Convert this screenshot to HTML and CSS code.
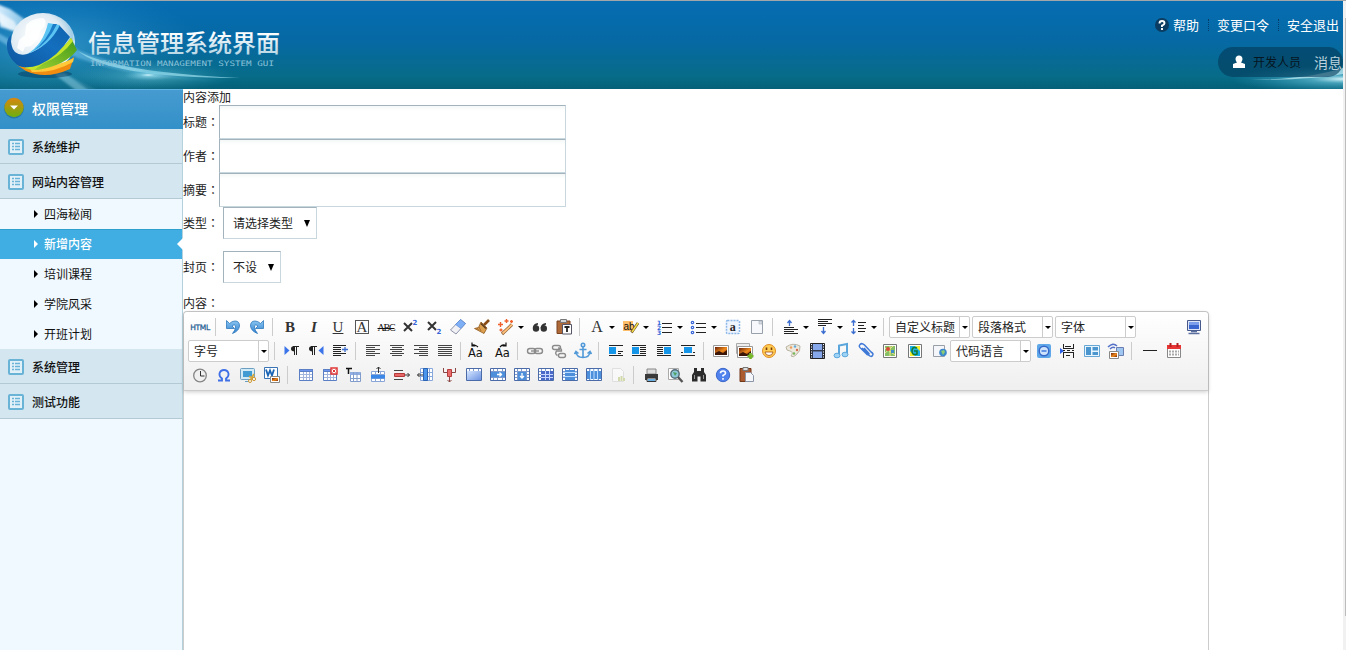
FILE: index.html
```
<!DOCTYPE html>
<html lang="zh-CN">
<head>
<meta charset="utf-8">
<title>信息管理系统界面</title>
<link rel="stylesheet" href="styles.css">
</head>
<body>
<svg class="defs" aria-hidden="true">
  <defs>
    <linearGradient id="tg" x1="0" y1="0" x2="0" y2="1"><stop offset=".25" stop-color="#fff"/><stop offset="1" stop-color="#a9cfe0"/></linearGradient>
    <linearGradient id="cell" x1="0" y1="0" x2="1" y2="1"><stop offset="0" stop-color="#d6e6ff"/><stop offset="1" stop-color="#6d93e2"/></linearGradient>
    <linearGradient id="arrow" x1="0" y1="0" x2="0" y2="1"><stop offset="0" stop-color="#8cc8f2"/><stop offset="1" stop-color="#2f7fd0"/></linearGradient>
    <linearGradient id="sun" x1="0" y1="0" x2="1" y2="1"><stop offset="0" stop-color="#6a2108"/><stop offset=".55" stop-color="#f08a1c"/><stop offset="1" stop-color="#7a2a08"/></linearGradient>
    <g id="list"><rect x="1" y="1" width="14" height="14" rx="1" fill="#e2f1f8" stroke="#69b3d6" stroke-width="2"/><path d="M4 4.500h2M7 4.500h5M4 7.500h2M7 7.500h5M4 10.500h2M7 10.500h5" stroke="#69b3d6" stroke-width="1.600"/></g>
    <g id="grid" fill="none" stroke="#5b7fc4"><path fill="#fff" d="M5.500 6.500h13v11h-13z"/><path stroke="#a3b5dc" d="M6 11.500h12M6 14.500h12M9.500 9v8M12.500 9v8M15.500 9v8"/><path fill="#6d95ee" d="M5.500 6.500h13v2h-13z"/></g>
    <g id="frame"><path d="M4.500 5.500h15v12h-15z" fill="#fff" stroke="#4a6aa8"/><path d="M5 8.500h14M5 11.500h14M5 14.500h14M7.500 6v11M11.500 6v11M16.500 6v11" stroke="#7d9acf"/></g>
    <g id="photo"><path d="M4.500 6.500h15v11h-15z" fill="#fff" stroke="#999"/><path d="M6 8h12v8H6z" fill="url(#sun)"/><path d="M6 14l4-2 4 2 4-3v5H6z" fill="#3b1608"/></g>
  </defs>
</svg>

<div class="page">
  <header class="top">
    <svg class="art" width="1343" height="89">
      <defs>
        <linearGradient id="bg" x1="0" y1="0" x2="0" y2="1"><stop offset="0" stop-color="#066db2"/><stop offset=".45" stop-color="#0669a4"/><stop offset=".85" stop-color="#076c88"/><stop offset="1" stop-color="#055f76"/></linearGradient>
        <radialGradient id="glow"><stop offset="0" stop-color="#dffaff" stop-opacity=".95"/><stop offset=".3" stop-color="#76cfe4" stop-opacity=".55"/><stop offset="1" stop-color="#3aa7cd" stop-opacity="0"/></radialGradient>
        <radialGradient id="haze"><stop offset="0" stop-color="#4fb4e4" stop-opacity=".6"/><stop offset="1" stop-color="#2a8cc8" stop-opacity="0"/></radialGradient>
        <linearGradient id="beam" gradientUnits="userSpaceOnUse" x1="0" y1="0" x2="230" y2="0"><stop offset="0" stop-color="#d8efff" stop-opacity=".95"/><stop offset=".2" stop-color="#6fbde6" stop-opacity=".7"/><stop offset=".6" stop-color="#62b6dd" stop-opacity=".45"/><stop offset="1" stop-color="#62b6dd" stop-opacity="0"/></linearGradient>
        <radialGradient id="ball" cx=".4" cy=".4" r=".62"><stop offset="0" stop-color="#fff"/><stop offset=".65" stop-color="#dfebf3"/><stop offset=".9" stop-color="#9fcbe5"/><stop offset="1" stop-color="#e9f6fd"/></radialGradient>
        <linearGradient id="wave" x1="0" y1="1" x2="1" y2="0"><stop offset="0" stop-color="#0d559f"/><stop offset=".6" stop-color="#146fbe"/><stop offset="1" stop-color="#0f63ae"/></linearGradient>
        <linearGradient id="leaf" x1="0" y1="1" x2="1" y2="0"><stop offset="0" stop-color="#a6d430"/><stop offset="1" stop-color="#3f9a1c"/></linearGradient>
        <filter id="soft" x="-10%" y="-30%" width="120%" height="160%"><feGaussianBlur stdDeviation="1.200"/></filter>
      </defs>
      <rect width="1343" height="89" fill="url(#bg)"/>
      <ellipse cx="50" cy="45" rx="150" ry="60" fill="url(#haze)"/>
      <g filter="url(#soft)">
        <path d="M-3 3L10 8 30 22 80 50Q150 76 230 80Q140 80 78 57L20 32 0 26z" fill="url(#beam)"/>
        <path d="M-3 10L14 20 20 31 10 29 -3 20z" fill="#fff" opacity=".6"/>
        <path d="M-3 31L12 40 10 46 -3 38z" fill="#8ecdf0" opacity=".55"/>
        <path d="M54 73L64 72 92 91H78z" fill="#8ecde2" opacity=".55"/>
        <path d="M64 73L98 91" stroke="#8ecde2" opacity=".4"/>
      </g>
      <ellipse cx="150" cy="75" rx="85" ry="16" fill="url(#glow)" opacity=".6"/>
      <path d="M78 50Q115 71 240 77Q110 77 78 50z" fill="#9ce0f0" opacity=".7"/>
      <ellipse cx="148" cy="74" rx="24" ry="5" fill="url(#glow)"/>
      <ellipse cx="1343" cy="78" rx="112" ry="14" fill="url(#glow)"/>
      <path d="M1250 79Q1310 78 1343 67V73Q1310 79 1250 79z" fill="#bdeaf3" opacity=".75"/>
      <ellipse cx="45" cy="73" rx="27" ry="4" fill="#033b63" opacity=".5"/>
      <ellipse cx="43" cy="41" rx="32" ry="29" fill="url(#ball)"/>
      <path d="M26 24q6-7 17-7 4 2 2 8l-5 5-2 8-7 7-6 1-2 5-6-4 2-8 6-5z" fill="#fff" opacity=".85"/>
      <path d="M17 64Q32 70 50 66T74 56L70 68Q46 79 26 70z" fill="#f08c10"/>
      <path d="M30 68Q54 67 74 57L73 61Q54 72 32 71z" fill="#ffc93a"/>
      <path d="M71 37L77 49Q66 64 38 69L26 68Q55 58 71 37z" fill="url(#leaf)"/>
      <path d="M71 37L73 40Q62 55 44 62L34 69 24 67Q56 56 71 37z" fill="#c3e52c"/>
      <path d="M59 24L70 36Q58 56 39 64Q28 68 19 65Q6 56 7 42Q8 36 11 34Q10 46 15 51Q20 55 27 53Q48 46 59 24z" fill="url(#wave)"/>
      <path d="M48 22L60 24Q50 45 27 53Q43 44 48 22z" fill="#5cc4f2"/>
      <path d="M53 23L57 23Q48 42 33 50Q47 40 53 23z" fill="#1b7cc8"/>
      <text class="brand" x="88" y="51" textLength="192" fill="url(#tg)">信息管理系统界面</text>
      <text class="brand-sub" x="90" y="65" textLength="184" lengthAdjust="spacingAndGlyphs">INFORMATION MANAGEMENT SYSTEM GUI</text>
    </svg>
    <nav class="links">
      <svg width="14" height="14"><circle cx="7" cy="7" r="7" fill="#0b3c61"/><path d="M4.500 5.500Q4.500 3 7 3t2.500 2.300Q9.500 6.500 7 7.700V9M7 10v2" fill="none" stroke="#fff" stroke-width="1.900"/></svg>
      <a>帮助</a><i></i><a>变更口令</a><i></i><a>安全退出</a>
    </nav>
    <div class="user">
      <svg width="14" height="14"><path d="M7 0.500a3.500 3.500 0 0 1 3.500 3.700Q10.300 6 9 7.500L13 9V13H1V9L5 7.500Q3.700 6 3.500 4.200A3.500 3.500 0 0 1 7 .5z" fill="#fff"/></svg>
      <b>开发人员</b><a>消息</a>
    </div>
  </header>

  <div class="body">
    <aside class="side">
      <h1><svg width="20" height="22"><defs><linearGradient id="kn" x1="0" y1="0" x2="0" y2="1"><stop offset="0" stop-color="#d9860f"/><stop offset="1" stop-color="#6cb10f"/></linearGradient></defs><circle cx="10" cy="11.500" r="10" fill="#2877a6"/><circle cx="10" cy="10.500" r="9.700" fill="url(#kn)"/><path d="M6 8.500h8l-4 4z" fill="#fff"/></svg>权限管理</h1>
      <h2><svg width="16" height="16"><use href="#list"/></svg>系统维护</h2>
      <h2><svg width="16" height="16"><use href="#list"/></svg>网站内容管理</h2>
      <ul>
        <li>四海秘闻</li>
        <li class="on">新增内容</li>
        <li>培训课程</li>
        <li>学院风采</li>
        <li>开班计划</li>
      </ul>
      <h2><svg width="16" height="16"><use href="#list"/></svg>系统管理</h2>
      <h2><svg width="16" height="16"><use href="#list"/></svg>测试功能</h2>
    </aside>

    <main class="main">
      <p class="title">内容添加</p>
      <div class="row"><label>标题<s lang="zh-TW">：</s></label><span class="input"></span></div>
      <div class="row"><label>作者<s lang="zh-TW">：</s></label><span class="input"></span></div>
      <div class="row"><label>摘要<s lang="zh-TW">：</s></label><span class="input"></span></div>
      <div class="row pick"><label>类型<s lang="zh-TW">：</s></label><span class="select">请选择类型<em></em></span></div>
      <div class="row pick"><label>封页<s lang="zh-TW">：</s></label><span class="select">不设<em></em></span></div>
      <p class="caption">内容<s lang="zh-TW">：</s></p>

      <section class="editor">
        <div class="bar">
          <div class="line">
            <span class="g html">HTML</span><i class="sep"></i>
            <svg class="c"><path d="M5.500 5.500v8h8l-2.500-2.500Q14.500 8.500 14.500 12 14.500 15 11.500 18.500 18 16 18.500 11 18.500 6 14 6 11 6 8.500 8.500z" fill="url(#arrow)" stroke="#2d78bd" stroke-width=".8"/></svg>
            <svg class="c"><path d="M18.500 5.500v8h-8l2.500-2.500Q9.500 8.500 9.500 12 9.500 15 12.500 18.500 6 16 5.500 11 5.500 6 10 6 13 6 15.500 8.500z" fill="url(#arrow)" stroke="#2d78bd" stroke-width=".8"/></svg>
            <i class="sep"></i>
            <span class="g bold">B</span><span class="g ital">I</span><span class="g und">U</span><span class="g"><span class="boxed">A</span></span><span class="g abc">ABC</span>
            <svg class="c"><path d="M6 8l8 8M14 8l-8 8" stroke="#333" stroke-width="2"/><text class="pow" x="14.500" y="9.500">2</text></svg>
            <svg class="c"><path d="M6 7l8 8M14 7l-8 8" stroke="#333" stroke-width="2"/><text class="pow" x="14.500" y="18.500">2</text></svg>
            <svg class="c"><path d="M14.500 4.500l5 4-9.500 10.500-5.500-4z" fill="#f1f1f6" stroke="#8d93a8"/><path d="M14.500 4.500l5 4-4.500 5-5.500-4z" fill="#7fb0f5" stroke="#4f83d6" stroke-width=".6"/></svg>
            <svg class="c"><path d="M19 5L14 10" stroke="#8a4b14" stroke-width="2.600"/><path d="M11 7l6 6-3 5.500-9.500-5 4-1z" fill="#dca050" stroke="#8c551a" stroke-width=".8"/><path d="M11 8.500l5 5" stroke="#5b3a1d" stroke-width="1.500"/><path d="M9 12l2 4M7 13l1.500 2" stroke="#9a5f22" stroke-width=".8"/></svg>
            <svg class="c"><path d="M8 19L18 9.500" stroke="#8d5c34" stroke-width="3.200"/><path d="M8.500 18.500L18 9.500" stroke="#ffc27a" stroke-width="1.800"/><path d="M4 9.500h5M6.500 7v5M10.500 6h4M12.500 4v4M16 6.500h3M17.500 5v3M5.500 15h3M7 13.500v3" stroke="#f0602c" stroke-width="1.400"/></svg>
            <i class="dd"></i>
            <svg class="c"><g fill="#333"><circle cx="8" cy="13.500" r="3.200"/><circle cx="15.800" cy="13.500" r="3.200"/><path d="M4.800 13Q5 8.500 10 8v1.500Q8 10 8 12zM12.600 13Q13 8.500 18 8v1.500Q16 10 16 12z"/></g></svg>
            <svg class="c"><path d="M5 6h13v12.500H5z" fill="#ad6a38" stroke="#7b4320"/><path d="M8.500 4.500h6v3h-6z" fill="#d5d5d5" stroke="#777"/><path d="M10.500 9.500h9v9.500h-9z" fill="#fff" stroke="#556"/><path d="M12.500 12h5M15 12v5" stroke="#222" stroke-width="1.800"/></svg>
            <i class="sep"></i>
            <span class="g fa">A</span><i class="dd"></i>
            <svg class="c"><rect x="4" y="6" width="10" height="10" fill="#ffbe69"/><text class="ab" x="4.500" y="15">ab</text><path d="M12.500 17.500L19 8" stroke="#6b4b23" stroke-width="2.800"/><path d="M13 17L19 8" stroke="#f2df4a" stroke-width="1.500"/></svg>
            <i class="dd"></i>
            <svg class="c"><path class="k" d="M9 8.500h10M9 12.500h10M9 17.500h10"/><text class="num" x="4" y="9.500">1</text><text class="num" x="4" y="14.500">2</text><text class="num" x="4" y="19.500">3</text></svg>
            <i class="dd"></i>
            <svg class="c"><path class="k" d="M9 8.500h10M9 12.500h10M9 17.500h10"/><g fill="#fff" stroke="#3b68d8" stroke-width="1.200"><circle cx="5.500" cy="7.500" r="1.200"/><circle cx="5.500" cy="12.500" r="1.200"/><circle cx="5.500" cy="17.500" r="1.200"/></g></svg>
            <i class="dd"></i>
            <svg class="c"><rect x="5.500" y="5.500" width="13" height="13" rx="1" fill="#eef5ff" stroke="#8db7e8" stroke-width="1.500" stroke-dasharray="2 1"/><text class="sa" x="8.800" y="15.500">a</text></svg>
            <svg class="c"><path d="M6.500 5.500h11v13h-11z" fill="#f6f8fb" stroke="#98a0aa"/><path d="M14 6h3v3h-3z" fill="#d8dee7" stroke="#98a0aa" stroke-width=".5"/></svg>
            <i class="sep wide"></i>
            <svg class="c"><path class="k" d="M5 12.500h10M5 14.500h14M5 16.500h10M5 18.500h14"/><path class="a" d="M10.500 11V6M8.500 8l2-2.500 2 2.500"/></svg>
            <i class="dd"></i>
            <svg class="c"><path class="k" d="M5 4.500h14M5 6.500h10M5 8.500h14M5 10.500h8"/><path class="a" d="M10.500 12v6M8.500 16l2 2.500 2-2.500"/></svg>
            <i class="dd"></i>
            <svg class="c"><path class="k" d="M11 7.500h8M11 10.500h6M11 13.500h8M11 16.500h7"/><path class="a" d="M6.500 6v5M6.500 13v5M4.500 7.500l2-2 2 2M4.500 16.500l2 2 2-2"/></svg>
            <i class="dd short"></i><i class="sep"></i>
            <span class="combo">自定义标题<b></b></span><span class="combo">段落格式<b></b></span><span class="combo">字体<b></b></span>
            <svg class="c end"><path d="M5.500 5.500h13v10h-13z" fill="#dfe6f5" stroke="#46598a"/><path d="M7 7h10v7H7z" fill="#3a66cf"/><path d="M7 7h10v3H7z" fill="#7c9fec"/><path d="M9 16.500h6M6.500 18.500h11" stroke="#5b6f9e" stroke-width="1.500"/></svg>
          </div>

          <div class="line">
            <span class="combo">字号<b></b></span><i class="sep"></i>
            <svg class="c"><path d="M4.500 7v9l5-4.500z" fill="#3b74ea"/><path d="M13 7.500h6M14.500 7v9M16.500 7v9" class="k"/><path d="M14.500 7v5.500Q11 12.500 11 9.800T14.500 7z" fill="#222"/></svg>
            <svg class="c"><path d="M19.500 7v9l-5-4.500z" fill="#3b74ea"/><path d="M7 7.500h6M8.500 7v9M10.500 7v9" class="k"/><path d="M8.500 7v5.500Q5 12.500 5 9.800T8.500 7z" fill="#222"/></svg>
            <svg class="c"><path class="k" d="M5 6.500h13M5 8.500h8M5 10.500h8M5 12.500h8M5 14.500h13M5 16.500h8"/><path class="a" d="M14 10.500h6M17 8v5"/></svg>
            <i class="sep"></i>
            <svg class="c"><path class="k2" d="M5 6.500h14M5 8.500h9M5 10.500h14M5 12.500h9M5 14.500h14M5 16.500h9"/></svg>
            <svg class="c"><path class="k2" d="M5 6.500h14M7 8.500h10M5 10.500h14M7 12.500h10M5 14.500h14M7 16.500h10"/></svg>
            <svg class="c"><path class="k2" d="M5 6.500h14M10 8.500h9M5 10.500h14M10 12.500h9M5 14.500h14M10 16.500h9"/></svg>
            <svg class="c"><path class="k2" d="M5 6.500h14M5 8.500h14M5 10.500h14M5 12.500h14M5 14.500h14M5 16.500h14"/></svg>
            <i class="sep"></i>
            <svg class="c"><text class="aa" x="2" y="17.500">Aa</text><path d="M6 7Q8 4.500 12 8M6 3.500V7h3.500" fill="none" stroke="#111" stroke-width="1.200"/></svg>
            <svg class="c"><text class="aa" x="5" y="17.500">Aa</text><path d="M10 8Q13 4.500 16 7M16 3.500V7h-3.500" fill="none" stroke="#111" stroke-width="1.200"/></svg>
            <i class="sep"></i>
            <svg class="c"><g fill="none" stroke="#8b8b8b" stroke-width="1.400"><rect x="4.500" y="9.500" width="8" height="5" rx="2.500"/><rect x="11.500" y="9.500" width="8" height="5" rx="2.500"/><path d="M8 12h8"/></g></svg>
            <svg class="c"><g fill="none" stroke="#8b8b8b" stroke-width="1.400"><rect x="5.500" y="6.500" width="8" height="4" rx="2"/><rect x="11.500" y="14.500" width="7" height="4" rx="2"/><path d="M11 9q4 0 3.500 3H9.500q-2 3 1 4.500"/></g></svg>
            <svg class="c"><g fill="none" stroke="#5299d8" stroke-width="1.600"><circle cx="12" cy="6" r="1.700"/><path d="M12 8v11M8.500 10.500h7M4.800 12.500Q5.500 18.500 12 18.500T19.200 12.500M3.500 15l1.500-2.500 2.500 2M20.500 15L19 12.500l-2.500 2"/></g></svg>
            <i class="sep"></i>
            <svg class="c"><path class="k" d="M5 6.500h14M14 12.500h5M14 14.500h3M5 16.500h14"/><path d="M5 8h7v7H5z" fill="#1595e8"/></svg>
            <svg class="c"><path class="k" d="M4 6.500h14M12 8.500h6M12 10.500h6M12 12.500h6M12 14.500h6M4 16.500h14"/><path d="M4 8h7v7H4z" fill="#1595e8"/></svg>
            <svg class="c"><path class="k" d="M5 6.500h14M5 8.500h6M5 10.500h6M5 12.500h6M5 14.500h6M5 16.500h14"/><path d="M12 8h7v7h-7z" fill="#1595e8"/></svg>
            <svg class="c"><path class="k" d="M5 6.500h14M5 13.500h2M17 13.500h2M5 16.500h14"/><path d="M8 8h8v6H8z" fill="#1595e8"/></svg>
            <i class="sep"></i>
            <svg class="c"><use href="#photo"/></svg>
            <svg class="c"><path d="M3.500 4.500h13v10h-13z" fill="#eee" stroke="#aaa"/><use href="#photo" y="1"/><path d="M14.500 17h6M17.500 14v6" stroke="#76b82a" stroke-width="2.600"/></svg>
            <svg class="c"><circle cx="12" cy="12" r="6.500" fill="#ffcd52" stroke="#e08c25"/><path d="M9.500 8.500v2.500M14.500 8.500v2.500" stroke="#7a3b08" stroke-width="1.600"/><path d="M8 13h8q-.5 3.500-4 3.500T8 13z" fill="#fff" stroke="#a34d10" stroke-width=".8"/></svg>
            <svg class="c"><path d="M5 8Q12 3 19 7q1 5-4 9-3 3-5 1 3-4-1-5-4 0-4-4z" fill="#ece9dc" stroke="#bab5a3"/><circle cx="10" cy="8.500" r="1.200" fill="#ef9b5c"/><circle cx="14" cy="7.500" r="1.200" fill="#63a7df"/><circle cx="16" cy="11" r="1.200" fill="#d86a4b"/><circle cx="13" cy="14.500" r="1.200" fill="#75b557"/></svg>
            <svg class="c"><path d="M5.500 4.500h14v15h-14z" fill="#333a4e" stroke="#222"/><path d="M8 5h9v6H8zM8 12.500h9V19H8z" fill="#86a8ea"/><path d="M6.500 5v14M18.500 5v14" stroke="#fff" stroke-dasharray="1 1.500"/></svg>
            <svg class="c"><path d="M10 16V6.500l8-1.500v10" fill="none" stroke="#5aa6dc" stroke-width="2"/><ellipse cx="8" cy="16.500" rx="3" ry="2.300" fill="#9fd3f5" stroke="#5aa6dc"/><ellipse cx="16" cy="15.500" rx="3" ry="2.300" fill="#9fd3f5" stroke="#5aa6dc"/></svg>
            <svg class="c"><path d="M9 9l6.500 7Q18 18.500 19.500 16.500T18 13L11.500 6Q9 3.500 7 5.500T8.500 10l5.500 5.500q2 1 2-1L11 9" fill="none" stroke="#3f79d8" stroke-width="1.500"/></svg>
            <svg class="c"><path d="M6.500 5.500h13v13h-13z" fill="#fff" stroke="#777"/><path d="M8 7h10v10H8z" fill="#86bf65"/><path d="M8 9l10 7M13 7v10M8 14l8-7" stroke="#f4e48a"/><circle cx="11" cy="10" r="2" fill="#d74936"/><path d="M14 11h3v3h-3z" fill="#3e8bcd"/></svg>
            <svg class="c"><path d="M7.500 5.500h13v13h-13z" fill="#fff" stroke="#777"/><path d="M9 7h10v10H9z" fill="#19b1e8"/><path d="M14 7h5v5zM9 12v5h5z" fill="#f4ee2c"/><path d="M16 9q-5-2-5 3t5 3v-3h-3" fill="none" stroke="#157a30" stroke-width="1.600"/></svg>
            <svg class="c"><path d="M8.500 6.500h11v11h-11z" fill="#f5f6f9" stroke="#999fa9"/><circle cx="18" cy="13.500" r="3.800" fill="#3c88cc"/><path d="M16 12l3-1 1 2-2 3z" fill="#8dcc72"/></svg>
            <span class="combo code">代码语言<b></b></span>
            <svg class="c"><rect x="5" y="5" width="14" height="14" rx="2" fill="#5ea8ea"/><circle cx="12" cy="12" r="4.800" fill="#cfe4fb" stroke="#3568c8" stroke-width="1.500"/><path d="M9.500 12h5" stroke="#3f78dc" stroke-width="1.500"/></svg>
            <svg class="c"><path d="M4 9v6l4-3z" fill="#2c62e8"/><path class="k" d="M7.500 5v4.500h10V5M9 7.500h6M7.500 19v-5.500h10V19M7 11.500h2M11 11.500h3M16 11.500h2M10 16.500h4"/></svg>
            <svg class="c"><path d="M4.500 6.500h15v11h-15z" fill="#eaf6ff" stroke="#68a6d3"/><path d="M6 8h5v8H6zM12.500 8H18v3.500h-5.500zM12.500 13H18v3h-5.500z" fill="#4b96cf"/></svg>
            <svg class="c"><path d="M4 8Q9 3 13 7M6 10q3-3 5-1" fill="none" stroke="#5572c8" stroke-width="1.500"/><path d="M12.500 8.500h7v8h-7z" fill="#9fc7f1" stroke="#6a7eb2"/><path d="M5.500 12.500h9v7h-9z" fill="#fff" stroke="#888"/><path d="M7 14h6v4H7z" fill="url(#sun)"/></svg>
            <i class="sep"></i>
            <svg class="c"><path class="k" d="M6 11.500h14"/></svg>
            <svg class="c"><path d="M6.500 6.500h13v12h-13z" fill="#fff" stroke="#888"/><path d="M6 6h14v4H6z" fill="#e73535"/><path d="M9.500 4v4M16.500 4v4" stroke="#b52020" stroke-width="2"/><path d="M8 12.500h10M8 15.500h10" stroke="#a9a9a9" stroke-width="2" stroke-dasharray="2 1"/></svg>
          </div>

          <div class="line">
            <svg class="c"><circle cx="12" cy="12.500" r="6.300" fill="#f0f0f0" stroke="#858585" stroke-width="1.300"/><path d="M12.500 8v5h4" fill="none" stroke="#333"/></svg>
            <svg class="c"><path d="M6 17.500h4v-2Q7 13.500 7.500 10.500 8.500 7 12 7t4.500 3.500Q17 13.500 14 15.500v2h4" fill="none" stroke="#3e6fe6" stroke-width="1.800"/></svg>
            <svg class="c"><rect x="4.500" y="5.500" width="14" height="11" rx="1" fill="#d2e9f6" stroke="#6a9fc2"/><path d="M7 8h9v6H7z" fill="#3f9bd2"/><path d="M9 18.500h5" stroke="#6a9fc2"/><path d="M18 11l-4 7M13 13.500l6 2" stroke="#d7a83c" stroke-width="1.800"/><circle cx="18" cy="16" r="1.600" fill="#fff" stroke="#cc9630"/><circle cx="14" cy="18" r="1.500" fill="#fff" stroke="#cc9630"/></svg>
            <svg class="c"><path d="M4.500 4.500h13v11h-13z" fill="#fff" stroke="#3873b5"/><path d="M6 6.500l2 6 2-5 2 5 2-6" fill="none" stroke="#1964b4" stroke-width="1.800"/><path d="M10.500 13.500h9v6h-9z" fill="#fff" stroke="#888"/><path d="M12 15h6v3h-6z" fill="url(#sun)"/></svg>
            <i class="sep wide"></i>
            <svg class="c"><use href="#grid"/></svg>
            <svg class="c"><use href="#grid"/><path d="M13 5h6v6h-6z" fill="#fff" stroke="#e03434" stroke-width="1.500"/><path d="M14.500 6.500l3 3M17.500 6.500l-3 3" stroke="#e03434"/></svg>
            <svg class="c"><path d="M4 5.500h6M6.500 5v6" stroke="#111" stroke-width="1.500"/><path d="M8.500 9.500h10v9h-10z" fill="#fff" stroke="#809dcc"/><path d="M8 9h10v3H8z" fill="#91aee0"/><path d="M11.500 9v9M15 9v9M8 15.500h10" stroke="#809dcc"/></svg>
            <svg class="c"><path d="M5.500 8.500h13v10h-13zM5 11.500h14M5 15.500h14M9.500 8v10M14.500 8v10" fill="#fff" stroke="#8aa5d8"/><path d="M5 12h14v3.500H5z" fill="#3a87e8"/><path d="M12.500 10V4M10.500 6l2-2 2 2" stroke="#333" fill="none"/></svg>
            <svg class="c"><path d="M4 7.500h9M4 16.500h9" stroke="#444"/><path d="M4.500 10.500h10v3h-10z" fill="#e86868" stroke="#b23939"/><path d="M15 12h4.500M17.500 10l2 2-2 2" fill="none" stroke="#333"/></svg>
            <svg class="c"><path d="M6.500 5.500h12v12h-12z" fill="#fff" stroke="#87a8dc"/><path d="M6 9.500h13M6 13.500h13M15.500 5v13" stroke="#87a8dc"/><path d="M9.500 5.500h4v12h-4z" fill="#4b96ed" stroke="#2b62b1"/><path d="M9 12H3.500M5.500 10l-2 2 2 2" fill="none" stroke="#333"/></svg>
            <svg class="c"><path d="M5.500 5v4.500h12V5M11.500 14v5M9.500 17l2 2 2-2" fill="none" stroke="#8c4545"/><path d="M9.500 6.500h4v7h-4z" fill="#e96b6b" stroke="#b53d3d"/></svg>
            <svg class="c"><use href="#frame"/><path d="M5 8h14v9H5z" fill="url(#cell)"/></svg>
            <svg class="c"><use href="#frame"/><path d="M5 9h14v5H5z" fill="#4e8fdb"/><path d="M11 11.500h5M13.500 9.500l2 2-2 2" fill="none" stroke="#fff" stroke-width="1.300"/></svg>
            <svg class="c"><use href="#frame"/><path d="M8 9h8v8H8z" fill="#4e8fdb"/><path d="M12 10v5M10 13l2 2 2-2" fill="none" stroke="#fff" stroke-width="1.300"/></svg>
            <svg class="c"><use href="#frame"/><path d="M7 8h12v9H7z" fill="#4a68c8"/><path d="M7 11.500h12M7 14.500h12M11.500 8v9M15.500 8v9" stroke="#c6d6ff"/></svg>
            <svg class="c"><use href="#frame"/><path d="M7 7h10v10H7z" fill="#4e8fdb"/><path d="M5 9.500h14M5 13.500h14" stroke="#b9dbff"/></svg>
            <svg class="c"><use href="#frame"/><path d="M5 8h14v8H5z" fill="#4e8fdb"/><path d="M8.500 6v11M12 6v11M15.500 6v11" stroke="#b9dbff"/></svg>
            <svg class="c dim"><path d="M6.500 5.500h8l3 3v10h-11z" fill="#fff" stroke="#ccc"/><path d="M13 18v-4M15.500 18v-5M18 18v-3" stroke="#b4c46b" stroke-width="2"/></svg>
            <i class="sep"></i>
            <svg class="c"><path d="M8 6h9v5H8z" fill="#ddd" stroke="#888"/><path d="M6 11h13v6H6z" fill="#3a3a3a"/><path d="M8 15h9v3.500H8z" fill="#eee" stroke="#333"/><path d="M9 17h7" stroke="#3e9be0" stroke-width="1.500"/></svg>
            <svg class="c"><path d="M5.500 5.500h10v11h-10z" fill="#fff" stroke="#aaa"/><circle cx="12" cy="11" r="4.200" fill="#8cc9d8" stroke="#566b78" stroke-width="1.400"/><path d="M10 9l4 1-2 3z" fill="#4f9d5e"/><path d="M15 14l4.500 5" stroke="#555" stroke-width="2.400"/></svg>
            <svg class="c"><path d="M7 5h3v3h4V5h3v4l2 3v6.500h-5.500v-5h-3v5H5V12l2-3z" fill="#2b2b2b"/><path d="M7.500 12v4M16.500 12v4" stroke="#999"/></svg>
            <svg class="c"><circle cx="12" cy="12" r="6.700" fill="#5082ee" stroke="#3c68ca"/><path d="M9.500 10.300Q9.500 8 12 8t2.500 2.200Q14.500 11.400 12 12.500V13.500M12 15v1.700" fill="none" stroke="#fff" stroke-width="1.600"/></svg>
            <svg class="c"><path d="M5 5.500h11v13H5z" fill="#aa5b30" stroke="#713716"/><path d="M8 4.500h5v3H8z" fill="#ddd" stroke="#777"/><path d="M10.500 9.500h5l3 3v6h-8z" fill="#f4f6fa" stroke="#8c95a5"/></svg>
          </div>
        </div>
      </section>
    </main>
  </div>
</div>
<div class="scroll"><span></span></div>
</body>
</html>
```
FILE: styles.css
```
* { box-sizing: border-box; }
body { margin: 0; height: 650px; overflow: hidden; display: flex; background: #fff; color: #222; font: 12px/16px "Noto Sans CJK SC", "Liberation Sans", sans-serif; }
h1, h2, p, ul { margin: 0; padding: 0; }
ul { list-style: none; }
svg { display: block; flex: none; }
s { text-decoration: none; font-family: "Noto Sans CJK TC", sans-serif; }
.defs { position: absolute; width: 0; height: 0; }

.page { width: 1343px; height: 650px; display: flex; flex-direction: column; border-top: 1px solid #a3a6a8; }
.scroll { width: 3px; padding: 17px 0 0 2px; background: #f1f1f1; border-top: 1px solid #a3a6a8; }
.scroll span { display: block; height: 598px; background: #bcbcbc; }

/* header */
.top { position: relative; height: 88px; flex: none; overflow: hidden; display: flex; flex-direction: column; align-items: flex-end; }
.art { position: absolute; top: 0; left: 0; }
.brand { font: 500 24px "Noto Sans CJK SC", sans-serif; }
.brand-sub { font: 7.5px "DejaVu Sans Mono", monospace; fill: #8cc3da; }
.links { position: relative; display: flex; align-items: center; height: 20px; margin: 14px 4px 0 0; color: #fff; font-size: 13px; }
.links svg { margin-right: 4px; }
.links i { width: 1px; height: 12px; margin: 0 8px 0 9px; border-left: 1px dotted #053d68; }
.user { position: relative; display: flex; align-items: center; height: 30px; width: 125px; margin-top: 12px; padding-left: 14px; white-space: nowrap; border-radius: 15px; background: rgba(4, 56, 88, .6); }
.user b { margin: 0 13px 0 7px; color: #06151f; font-weight: 400; }
.user a { color: #bcd3de; font-size: 14px; }

.body { flex: 1; display: flex; min-height: 0; }

/* sidebar */
.side { width: 183px; flex: none; background: #f0f9ff; border-right: 1px solid #b4d2de; color: #111; }
.side h1 { display: flex; align-items: center; width: 183px; height: 40px; padding: 0 0 3px 4px; gap: 8px; color: #fff; font-size: 14px; font-weight: 500; border-top: 1px solid #62b5e4; background: linear-gradient(#469bd0, #3390c8); }
.side h2 { display: flex; align-items: center; height: 35px; padding: 1px 0 0 8px; gap: 8px; font-size: 12px; font-weight: 500; background: #d4e6f0; border-bottom: 1px solid #b3cad5; }
.side li { position: relative; display: flex; align-items: center; height: 30px; padding-left: 34px; }
.side li::before { content: ""; margin-right: 6px; border: 4px solid transparent; border-left-color: #000; border-right: 0; }
.side li.on { color: #fff; font-weight: 500; background: #40aee2; box-shadow: inset 0 1px #2f9fd0; }
.side li.on::before { border-left-color: #fff; }
.side li.on::after { content: ""; position: absolute; right: -1px; top: 9px; border: 6px solid transparent; border-right-color: #fff; border-left: 0; }

/* form */
.main { flex: 1; display: flex; flex-direction: column; align-items: flex-start; min-width: 0; }
.title { height: 16px; line-height: 16px; }
.row { display: flex; align-items: center; height: 34px; }
.row label { flex: none; width: 36px; line-height: 32px; white-space: nowrap; }
.input { width: 347px; height: 34px; border: 1px solid; border-color: #a3b3be #c8d6de #c8d6de #a3b3be; background: linear-gradient(#f5f8f8, #fff 5px); }
.pick { height: 32px; margin-bottom: 12px; }
.select { display: flex; align-items: center; height: 32px; margin-left: 4px; padding: 0 5px 0 9px; gap: 11px; border: 1px solid; border-color: #a3b3be #c8d6de #c8d6de #a3b3be; }
.select em { border: 3.500px solid transparent; border-top: 7px solid #000; border-bottom: 0; margin-right: 1px; }
.caption { height: 16px; line-height: 16px; }

/* editor */
.editor { width: 1026px; flex: 1; border: 1px solid #ccc; border-bottom: 0; border-radius: 4px 4px 0 0; }
.bar { height: 79px; padding: 3px 2px 0 4px; border-bottom: 1px solid #ccc; border-radius: 4px 4px 0 0; background: linear-gradient(#fff, #efefef); box-shadow: 0 1px 4px rgba(0, 0, 0, .2); }
.line { display: flex; align-items: center; height: 24px; }
.c { width: 24px; height: 24px; }
.end { margin-left: auto; }
.dim { opacity: .5; }
.sep { flex: none; width: 9px; height: 18px; border-left: 3px solid transparent; background: linear-gradient(#ccc, #ccc) 0 0 / 1px 100% no-repeat; }
.wide { width: 10px; }
.dd { flex: none; width: 10px; height: 24px; display: flex; align-items: center; }
.short { width: 9px; }
.dd::before { content: ""; border: 3px solid transparent; border-top-color: #000; border-bottom: 0; }
.combo { flex: none; display: flex; justify-content: space-between; align-items: center; width: 81px; height: 22px; margin-right: 2px; padding-left: 5px; white-space: nowrap; background: #fff; border: 1px solid #ccc; border-radius: 2px; }
.combo b { width: 10px; height: 20px; display: flex; align-items: center; justify-content: center; border-left: 1px solid #ccc; }
.combo b::before { content: ""; border: 3px solid transparent; border-top-color: #000; border-bottom: 0; }
.code { margin: 0 1px; }
.k { fill: none; stroke: #222; shape-rendering: crispEdges; }
.k2 { fill: none; stroke: #444; shape-rendering: crispEdges; }
.a { fill: none; stroke: #3d6fd0; stroke-width: 1.300; }

/* text glyph buttons */
.g { flex: none; display: flex; align-items: center; justify-content: center; width: 24px; height: 24px; color: #333; font: 15px "Liberation Serif", serif; }
.html { color: #2b6597; font: 7.5px "DejaVu Sans", sans-serif; letter-spacing: -.3px; -webkit-text-stroke: .3px #2b6597; }
.bold { font-weight: bold; }
.ital { font-style: italic; font-weight: bold; }
.und { text-decoration: underline; }
.boxed { width: 14px; height: 14px; border: 1px solid #555; line-height: 12px; text-align: center; }
.abc { font-size: 10px; text-decoration: line-through; letter-spacing: -1.200px; color: #111; }
.pow { font: bold 7px "DejaVu Sans", sans-serif; fill: #3464d8; }
.fa { font-size: 16px; }
.ab { font: 10px "Liberation Sans", sans-serif; fill: #111; }
.num { font: bold 6px "DejaVu Sans", sans-serif; fill: #3464d8; }
.sa { font: bold 12px "Liberation Serif", serif; fill: #222; }
.aa { font: 11.5px "DejaVu Sans", sans-serif; fill: #111; }
```
